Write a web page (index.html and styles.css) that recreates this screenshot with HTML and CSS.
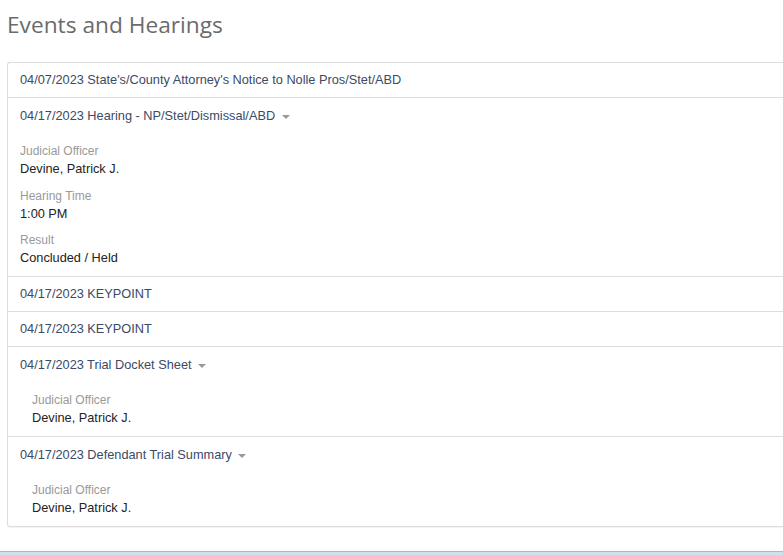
FILE: index.html
```html
<!DOCTYPE html>
<html lang="en">

<head>
    <meta charset="UTF-8">
    <meta name="viewport" content="width=device-width, initial-scale=1.0">
    <title>Events and Hearings</title>
    <link rel="stylesheet" href="styles.css">
</head>

<body>
    <div class="page">
        <h1 class="title">Events and Hearings</h1>

        <div class="panel">
            <div class="event">
                <div class="event-head">04/07/2023 State's/County Attorney's Notice to Nolle Pros/Stet/ABD</div>
            </div>

            <div class="event open">
                <div class="event-head">04/17/2023 Hearing - NP/Stet/Dismissal/ABD <span class="caret"></span></div>
                <div class="event-body">
                    <div class="field">
                        <div class="field-label">Judicial Officer</div>
                        <div class="field-value">Devine, Patrick J.</div>
                    </div>
                    <div class="field">
                        <div class="field-label">Hearing Time</div>
                        <div class="field-value">1:00 PM</div>
                    </div>
                    <div class="field">
                        <div class="field-label">Result</div>
                        <div class="field-value">Concluded / Held</div>
                    </div>
                </div>
            </div>

            <div class="event">
                <div class="event-head">04/17/2023 KEYPOINT</div>
            </div>

            <div class="event">
                <div class="event-head">04/17/2023 KEYPOINT</div>
            </div>

            <div class="event open">
                <div class="event-head">04/17/2023 Trial Docket Sheet <span class="caret"></span></div>
                <div class="event-body indented">
                    <div class="field">
                        <div class="field-label">Judicial Officer</div>
                        <div class="field-value">Devine, Patrick J.</div>
                    </div>
                </div>
            </div>

            <div class="event open">
                <div class="event-head">04/17/2023 Defendant Trial Summary <span class="caret"></span></div>
                <div class="event-body indented">
                    <div class="field">
                        <div class="field-label">Judicial Officer</div>
                        <div class="field-value">Devine, Patrick J.</div>
                    </div>
                </div>
            </div>
        </div>
    </div>

    <div class="footer-bar"></div>
</body>

</html>
```

FILE: styles.css
```css
html,
body {
    margin: 0;
    overflow: hidden;
}

body {
    background: #fff;
    font-family: 'Liberation Sans', Arial, sans-serif;
    color: #333;
    height: 555px;
    display: flex;
    flex-direction: column;
}

.page {
    padding: 0 0 0 7px;
    flex: 1;
}

.title {
    font-family: 'Open Sans', sans-serif;
    font-weight: normal;
    font-size: 22.7px;
    line-height: 28px;
    color: #6b6b6b;
    margin: 11px 0 23px;
}

.panel {
    border: 1px solid #ddd;
    border-right: none;
    border-radius: 3px 0 0 3px;
    box-shadow: 0 1px 1px rgba(0, 0, 0, 0.05);
    margin-right: -20px;
}

.event + .event {
    border-top: 1px solid #ddd;
}

.event-head {
    padding: 8px 12px;
    font-size: 12.75px;
    line-height: 18px;
    color: #3b4a66;
}

.event.open .event-head {
    padding-top: 9px;
    padding-bottom: 0;
}

.caret {
    display: inline-block;
    width: 0;
    height: 0;
    margin-left: 3px;
    vertical-align: middle;
    border-top: 4px solid #999;
    border-left: 4px solid transparent;
    border-right: 4px solid transparent;
}

.event-body {
    padding: 18px 12px 8px;
}

.event-body.indented {
    padding-left: 24px;
}

.field + .field {
    margin-top: 8.5px;
}

.field-label {
    font-size: 12px;
    line-height: 16px;
    color: #999;
}

.field-value {
    font-size: 12.75px;
    line-height: 20px;
    color: #222;
}

.footer-bar {
    height: 3px;
    background: #d3def0;
    border-top: 1px solid #a9b8d2;
}
```
